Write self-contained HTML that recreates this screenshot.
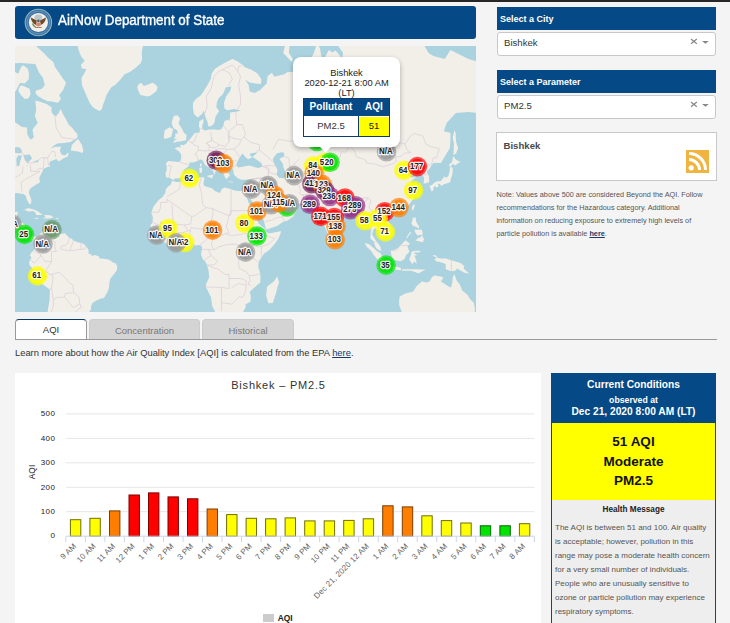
<!DOCTYPE html>
<html><head><meta charset="utf-8">
<style>
*{box-sizing:border-box}
html,body{margin:0;padding:0}
body{width:730px;height:623px;overflow:hidden;background:#f4f4f4;font-family:"Liberation Sans",sans-serif;position:relative;color:#333}
.a{position:absolute}
#topbar{left:0;top:0;width:730px;height:2px;background:#262626}
#hdr{left:15px;top:6px;width:461px;height:33px;background:#054a86;border-radius:3px}
#hdr .t{left:43px;top:6px;font-size:14px;color:#fff;white-space:nowrap;line-height:16px;transform:scaleX(0.955);transform-origin:0 0;-webkit-text-stroke:0.35px #fff}
#map{left:15px;top:46px;width:461px;height:266px;background:#aad3df;overflow:hidden}
.ph{background:#054a86;color:#fff;font-weight:bold;font-size:9px;line-height:12px;padding-left:3px}
.sel{background:#fff;border:1px solid #c8c8c8;border-radius:3px;font-size:9.6px;color:#333}
.note{font-size:7.3px;line-height:13px;color:#555;white-space:nowrap}
.cc{text-align:center;font-weight:bold;color:#fff;white-space:nowrap}
.tab{border:1px solid #ccc;border-bottom:none;border-radius:4px 4px 0 0;background:#d4d4d4;color:#777;font-size:9.5px;text-align:center;line-height:21px}
</style></head><body>
<div id="topbar" class="a"></div>
<div id="hdr" class="a">
  <svg class="a" style="left:9px;top:2px" width="29" height="29" viewBox="0 0 29 29">
    <circle cx="14.4" cy="14.5" r="13.2" fill="#3d74a4" stroke="#8fb5bf" stroke-width="1.1"/>
    <circle cx="14.4" cy="14.5" r="11.3" fill="none" stroke="#6f9cc0" stroke-width="0.8"/>
    <circle cx="14.4" cy="14.5" r="9.6" fill="#f3f0ea"/>
    <ellipse cx="14.4" cy="9.5" rx="4" ry="3" fill="#b9c6cc"/>
    <path d="M6.8 9.5 Q7.5 15.5 12.2 17 L12.8 12.5 Z" fill="#6e4c2a"/>
    <path d="M22 9.5 Q21.3 15.5 16.6 17 L16 12.5 Z" fill="#6e4c2a"/>
    <circle cx="14.4" cy="13" r="1.4" fill="#5a6470"/>
    <path d="M12 14.5 L16.8 14.5 L16.8 17.5 Q14.4 19.5 12 17.5 Z" fill="#cf8a7a"/>
    <path d="M8.5 15.5 Q9.5 18.5 11.5 19" stroke="#6f8a50" stroke-width="1.3" fill="none"/>
    <path d="M11 19.5 L17.8 19.5" stroke="#8a6a50" stroke-width="0.8"/>
  </svg>
  <div class="a t">AirNow Department of State</div>
</div>

<div id="map" class="a"><svg class="a" style="left:0;top:0" width="461" height="266" viewBox="15 46 461 266"><rect x="15" y="46" width="461" height="266" fill="#aad3df"/><path d="M-44.5 75.3L3.0 72.7L13.5 71.2L18.2 73.8L21.1 66.9L23.3 65.2L27.7 68.5L29.0 73.8L28.7 79.3L24.8 83.6L20.1 82.7L17.6 87.8L15.3 91.4L11.2 97.0L4.9 106.4L4.5 114.7L7.8 121.2L14.4 121.8L22.0 127.0L27.1 127.6L27.3 134.4L30.4 139.7L33.8 137.5L32.5 129.6L37.6 122.9L34.9 115.8L36.2 110.2L35.7 104.4L35.3 100.4L41.0 102.0L46.7 104.0L51.5 107.2L51.5 112.1L54.7 116.2L58.1 114.0L60.6 108.7L62.9 114.0L66.1 119.4L68.6 124.6L72.4 127.9L74.6 131.2L77.1 133.5L77.7 136.9L75.6 139.1L70.5 142.1L63.8 143.0L57.2 143.6L53.3 145.9L50.9 148.5L55.2 146.8L61.3 146.8L60.0 149.4L60.4 152.2L61.5 154.4L64.8 155.5L68.7 152.5L68.0 156.3L62.9 158.7L58.7 161.6L56.4 159.0L50.1 161.4L49.0 164.2L50.5 166.3L46.9 167.3L43.1 169.1L42.5 171.8L41.2 173.3L40.8 174.7L39.3 177.8L39.3 178.8L40.1 182.1L38.2 183.5L35.3 185.1L31.7 187.6L29.6 189.4L28.8 193.1L30.4 197.1L31.5 200.7L30.7 204.1L29.4 204.3L27.9 201.4L26.4 198.4L25.8 195.8L23.3 194.0L20.1 193.4L16.3 192.9L13.5 193.4L14.0 195.5L8.7 194.9L4.9 194.5L-0.8 198.1L-1.2 202.4L-2.3 210.7L1.1 216.8L4.0 217.8L8.7 217.6L11.6 215.2L12.5 212.4L18.0 211.8L17.2 214.8L16.7 217.8L15.9 220.2L15.0 223.0L19.2 223.2L22.0 222.8L25.4 224.8L24.7 229.7L24.3 232.6L26.0 234.9L27.9 236.0L32.5 235.7L36.4 237.2L38.2 236.4L40.1 233.7L42.5 232.2L45.8 231.6L47.3 229.9L47.8 231.6L47.7 233.5L50.3 231.6L50.5 230.2L53.3 232.6L56.4 233.3L61.0 234.1L64.8 233.2L66.1 234.5L68.6 237.2L72.4 239.3L72.9 240.6L78.6 242.4L81.3 243.1L84.1 244.3L86.2 246.4L88.5 249.8L88.5 253.6L91.4 254.6L91.5 255.9L95.2 255.1L99.0 256.5L99.5 258.4L103.7 258.7L107.5 259.3L110.4 260.6L113.2 262.7L116.0 263.5L117.4 266.9L116.6 270.8L114.2 273.7L110.4 278.5L109.4 282.4L109.0 287.4L108.1 290.4L106.0 294.4L103.9 298.1L100.9 298.5L97.0 300.2L92.7 302.7L91.2 305.8L90.8 310.1L87.9 313.4L79.0 324.7L46.7 324.7L47.7 311.2L49.6 299.6L49.9 289.4L45.8 286.4L40.1 282.4L36.8 276.6L32.8 268.8L29.4 265.0L29.0 262.2L30.9 258.4L31.7 257.8L29.8 255.5L31.3 252.6L33.4 250.7L34.7 248.8L36.6 246.0L36.4 241.2L34.7 239.3L30.9 239.9L28.1 238.0L25.8 237.8L21.4 235.3L20.5 233.0L18.6 230.2L17.1 228.3L14.4 228.1L9.8 226.7L5.3 223.4L3.0 222.4L-0.8 223.2L-6.5 221.8L-25.5 193.8L-44.5 75.3ZM50.5 101.2L58.1 102.8L61.0 98.7L59.1 94.9L62.9 90.5L66.1 82.7L62.3 77.8L59.1 72.7L55.2 67.4L53.3 61.9L47.7 57.2L43.8 53.0L38.2 48.0L31.5 41.4L3.0 41.4L3.0 64.1L20.1 63.0L35.3 64.1L39.1 72.7L42.9 77.8L44.8 85.0L42.0 88.7L36.2 90.5L35.3 93.1L38.2 96.2L42.9 99.1L47.7 101.2ZM22.4 85.5L29.6 88.7L30.6 94.0L28.7 98.3L24.8 99.1L21.1 95.3L18.2 90.5L20.1 86.0ZM100.1 111.0L102.2 108.3L103.1 104.4L104.7 100.4L106.5 94.9L111.3 87.3L115.1 85.0L119.8 80.3L124.6 74.3L130.3 71.7L136.0 67.4L140.8 63.0L142.1 59.0L141.7 53.0L142.7 46.7L149.3 32.9L145.5 8.4L50.5 8.4L73.3 32.9L77.1 43.4L78.6 49.9L80.9 56.0L84.7 60.7L80.9 64.7L81.9 68.5L86.4 69.0L83.8 74.3L81.5 77.8L81.9 85.0L83.8 89.6L85.3 93.1L87.6 98.3L89.5 102.4L92.3 106.4L95.2 108.7L98.0 110.2ZM147.4 96.6L140.4 94.9L138.1 90.5L137.3 87.3L138.8 84.1L141.7 83.1L143.6 86.0L148.3 84.6L152.2 82.7L155.0 84.1L157.7 87.3L156.5 90.9L154.1 93.1L150.2 95.7ZM70.8 150.5L71.8 145.0L78.1 138.8L81.9 145.0L83.4 150.8L82.4 153.0L78.1 151.6ZM26.9 208.5L22.2 210.9L24.8 210.1L28.7 211.6L33.4 211.1L36.2 213.4L35.9 215.0L40.4 215.0L42.7 214.4L39.7 212.8L35.7 210.3L30.6 208.5L27.7 208.3ZM45.2 215.0L50.5 215.2L53.7 217.6L48.6 218.4L42.0 218.6L45.8 217.6L44.0 215.4ZM34.7 217.8L38.5 218.0L37.6 219.0L34.5 218.4ZM55.8 217.8L58.9 218.0L58.5 218.8L55.8 218.8ZM173.2 180.0L171.5 179.0L169.4 177.4L166.4 177.8L165.4 173.7L166.6 170.5L166.8 166.8L165.8 163.2L168.5 161.1L174.0 161.6L179.7 161.9L181.2 159.0L181.2 154.4L178.8 151.3L174.6 148.5L177.8 147.1L180.5 147.4L180.5 144.5L183.5 145.3L186.3 143.6L188.2 140.6L190.2 139.1L192.4 136.0L194.9 133.1L199.7 132.5L199.8 128.6L198.9 126.3L199.3 121.2L203.6 118.7L203.3 122.9L202.1 126.3L202.5 129.6L205.3 130.6L209.2 129.6L214.8 129.6L219.0 129.9L221.5 128.9L223.4 125.6L224.3 121.2L228.2 119.4L229.5 121.2L230.1 116.5L230.1 112.5L236.7 111.7L240.9 110.6L233.8 109.1L227.2 110.2L224.3 108.3L224.0 102.4L226.2 96.2L230.1 90.9L231.4 86.4L225.9 87.3L223.0 94.0L218.7 98.3L216.8 102.4L216.4 107.5L219.2 111.0L217.3 114.0L215.4 116.9L214.8 121.2L213.7 123.9L210.5 126.6L208.0 125.9L207.6 122.2L206.1 118.7L204.6 114.3L203.8 110.6L202.1 114.0L197.8 117.6L194.1 114.3L193.0 108.7L193.0 102.8L195.8 99.1L200.4 95.7L203.4 91.8L206.9 86.0L210.9 78.8L211.6 73.8L214.8 69.0L219.6 65.8L225.3 62.4L232.5 59.0L237.3 61.3L242.4 64.7L245.2 67.4L250.9 69.6L257.2 73.2L261.4 79.3L261.0 84.1L254.8 83.6L249.1 82.2L245.2 79.8L248.7 85.0L249.6 91.4L254.8 93.1L260.1 90.1L266.7 83.6L267.5 76.3L271.9 72.7L274.3 76.8L284.2 74.3L287.1 72.2L294.6 71.7L298.3 65.2L306.1 70.1L309.9 68.5L310.2 60.7L313.6 53.6L317.1 43.4L319.9 48.0L321.8 59.0L323.1 72.7L320.3 82.2L325.0 81.2L324.5 70.1L325.6 56.0L328.9 49.9L332.6 52.4L335.5 50.5L340.2 56.0L341.2 64.7L343.1 53.0L336.4 43.4L335.5 17.1L373.5 17.1L402.0 32.9L422.9 43.4L428.6 53.0L433.4 56.0L444.8 59.0L450.4 49.9L468.5 59.0L487.5 64.7L497.0 102.4L487.5 106.4L478.0 112.9L468.5 112.1L455.8 112.9L446.6 122.9L443.8 131.2L450.4 132.8L450.4 140.6L449.9 147.9L446.6 153.6L440.9 162.9L434.1 162.7L431.8 164.7L430.1 168.0L426.7 171.8L429.0 176.6L429.2 182.1L425.8 183.2L423.5 183.7L423.9 181.4L423.9 177.8L423.3 176.2L421.4 173.0L420.0 171.0L417.2 171.3L413.8 173.5L414.4 168.6L411.5 170.5L408.6 172.5L406.9 174.2L409.4 176.6L411.9 177.4L416.4 176.9L412.1 180.2L410.5 182.5L413.2 188.2L415.1 191.2L415.7 193.8L413.8 198.1L410.7 202.4L408.1 205.6L404.9 208.7L400.5 210.1L394.4 211.8L392.9 214.2L389.6 211.8L386.8 212.8L384.5 215.8L385.9 218.8L389.1 222.8L391.2 227.7L391.0 231.6L387.8 233.5L385.9 235.9L382.6 237.2L382.0 233.9L379.2 231.6L376.9 229.7L375.2 227.9L373.4 229.7L372.0 234.5L374.3 238.0L376.4 241.2L380.0 246.0L381.5 250.9L378.8 250.0L376.0 247.9L374.1 243.1L373.5 241.2L370.3 238.4L370.6 234.5L371.0 230.6L369.1 223.8L368.4 221.8L364.0 222.2L362.7 217.8L360.0 213.8L357.9 210.7L355.4 209.7L352.6 211.1L348.8 211.8L348.2 214.2L342.1 218.8L339.9 221.8L336.4 223.2L336.1 228.1L335.1 232.6L334.0 235.9L330.8 238.2L328.3 234.5L325.8 229.7L323.7 223.8L321.8 216.8L321.6 212.8L321.4 210.3L318.4 213.2L314.6 210.1L313.3 208.7L311.4 206.6L310.6 204.9L301.3 203.9L292.8 203.7L290.5 200.3L283.2 199.2L279.8 196.0L276.2 193.8L274.7 195.3L276.0 198.1L278.5 201.4L281.4 202.4L281.0 202.0L281.4 205.6L286.1 206.2L288.6 203.9L290.7 201.8L290.7 204.9L294.8 207.4L297.1 209.7L294.6 213.8L293.1 216.8L287.1 220.8L283.2 221.8L277.6 225.8L269.0 228.7L266.0 229.5L264.8 224.8L263.9 220.8L258.0 211.8L255.7 206.6L251.3 200.3L249.6 198.1L250.0 194.9L248.5 198.6L245.2 194.0L244.9 191.2L249.6 188.2L250.9 185.1L251.5 181.4L252.3 178.8L246.2 179.7L241.4 179.7L237.7 178.3L233.8 174.5L233.3 170.5L232.5 168.3L229.1 168.6L228.2 170.5L227.0 169.1L226.8 171.8L230.1 175.0L229.1 176.2L226.2 179.3L224.5 176.6L224.0 174.7L221.9 171.8L220.4 169.3L219.8 165.5L214.7 161.6L210.5 156.8L206.9 156.6L207.4 160.3L211.6 165.5L214.1 165.8L217.5 169.1L218.5 171.0L215.8 169.3L215.0 173.3L213.3 175.7L213.9 173.0L212.0 169.3L210.5 168.6L206.9 166.3L204.6 164.2L203.1 160.8L200.4 159.3L197.4 161.1L193.8 162.2L189.4 162.4L189.6 164.7L187.7 167.0L184.4 169.3L182.9 171.8L183.9 173.7L182.2 176.4L179.3 178.3L175.1 178.5ZM172.5 180.7L170.6 184.8L169.1 185.8L166.0 188.7L165.3 192.9L162.6 197.1L158.4 200.3L153.5 206.6L151.4 212.2L151.0 213.2L152.5 215.8L152.9 218.8L152.2 222.8L150.2 225.4L151.8 227.7L151.6 230.6L155.0 232.6L157.5 235.5L158.4 237.6L160.7 240.3L163.0 241.6L168.9 245.2L175.9 243.7L179.7 244.5L183.5 243.1L186.3 241.8L190.0 241.4L195.3 245.4L199.3 245.0L201.7 246.0L202.1 248.8L201.4 251.7L201.0 254.6L202.5 258.4L206.1 262.7L206.9 265.0L208.6 270.4L209.2 277.5L206.3 283.4L205.9 287.0L211.1 297.5L212.2 306.1L214.8 311.2L217.3 320.1L221.5 324.2L231.9 322.4L238.6 317.8L242.4 313.0L245.8 306.9L245.4 304.6L250.6 301.6L250.8 295.4L249.6 292.0L253.8 288.0L260.4 282.4L260.4 276.6L260.3 273.7L258.2 266.6L258.9 261.2L261.4 257.4L264.2 253.6L269.6 249.8L274.7 244.1L278.5 238.4L280.6 233.5L281.0 231.0L276.6 232.0L269.0 233.5L265.6 231.6L265.4 229.3L259.1 223.8L258.6 223.6L256.6 218.8L254.2 215.6L253.4 210.7L251.1 206.6L248.5 202.4L247.5 199.2L245.2 194.0L244.9 191.2L242.4 190.5L240.3 191.2L234.8 190.5L227.8 188.2L224.7 187.6L221.7 189.1L220.0 193.1L214.8 190.9L212.0 188.2L208.6 187.3L204.4 186.0L203.4 183.7L204.0 180.7L204.6 178.1L202.1 177.1L198.7 178.1L193.0 178.3L189.2 178.3L183.5 180.7L179.7 182.1L175.9 182.1ZM277.2 276.6L279.1 282.4L277.6 286.4L276.2 292.4L272.8 302.9L268.4 303.3L266.1 295.4L267.1 286.4L269.9 284.4L273.8 281.4ZM172.7 143.3L176.8 141.8L181.6 141.2L186.0 140.3L186.3 138.2L186.5 134.7L183.9 132.8L182.4 129.6L179.7 125.3L178.6 122.9L180.1 118.7L177.8 115.4L174.0 115.8L172.5 119.4L171.7 122.9L172.9 127.0L174.0 128.6L177.2 130.2L177.8 133.5L174.9 133.8L175.7 136.3L173.6 138.5L177.2 139.1L174.9 140.0ZM164.9 139.1L163.7 137.2L164.3 133.1L164.7 130.2L169.6 127.3L173.1 129.3L172.1 133.5L171.3 136.9ZM199.1 168.0L202.1 167.5L201.9 172.5L199.7 173.0L199.5 169.3ZM199.8 164.2L201.4 162.9L201.6 165.5L201.0 167.0L200.0 166.0ZM207.1 175.7L213.1 174.7L212.2 178.5L207.4 176.6ZM228.2 181.4L233.5 181.8L232.9 182.5L228.3 182.1ZM244.9 182.5L249.2 180.9L247.9 182.8L245.8 183.5ZM335.9 234.9L338.9 238.4L338.9 241.2L336.6 242.4L335.1 240.3L335.3 237.4ZM431.6 191.6L429.5 186.0L432.4 184.8L433.0 183.7L436.2 181.4L440.9 181.1L443.4 177.8L444.4 176.6L446.6 177.8L448.6 175.4L449.5 171.8L450.1 167.5L451.8 166.8L452.9 169.3L452.3 174.7L450.8 179.0L450.3 182.1L449.1 182.8L446.1 183.5L443.4 184.4L441.5 186.0L440.0 184.1L438.1 183.7L438.5 186.7L436.2 187.6L435.2 186.0L433.9 187.1L433.2 190.5ZM449.7 167.0L449.1 164.2L452.0 162.2L453.1 156.3L456.1 159.8L460.5 161.9L458.1 163.2L455.6 165.3L452.0 164.0L451.4 166.0ZM453.3 154.9L453.7 149.4L453.9 143.6L452.7 137.5L454.6 130.2L455.6 132.8L456.1 142.1L458.1 147.9L456.1 153.6ZM414.4 203.9L414.7 206.6L413.0 210.7L411.7 208.7L412.6 205.6ZM393.8 214.6L394.4 215.8L391.5 218.4L389.8 216.4L391.5 214.8ZM412.8 217.8L415.7 217.6L416.1 221.8L419.1 226.7L419.1 228.7L417.2 227.3L413.4 226.1L411.3 223.8L412.1 221.8ZM421.9 234.9L424.0 239.3L422.9 242.2L415.5 240.6L418.1 238.0L420.6 237.2ZM421.9 229.7L422.9 234.5L417.2 235.5L415.3 232.6L414.4 229.7ZM406.2 237.6L410.5 231.6L411.1 232.6L406.8 238.4ZM405.4 240.3L408.3 242.2L410.0 244.1L407.3 246.0L409.4 251.7L405.8 255.5L404.9 258.4L401.0 261.2L395.4 260.3L392.9 259.3L391.5 255.5L390.6 250.7L394.4 249.8L398.2 247.9L400.7 245.0L402.9 243.1ZM364.6 242.9L368.8 244.1L372.5 246.9L376.4 250.7L380.7 253.6L383.4 258.4L384.9 260.3L384.5 264.8L381.1 263.1L377.3 259.3L374.1 255.5L371.0 250.7L366.9 246.9ZM385.3 264.8L389.3 265.2L393.4 266.7L397.6 266.7L401.0 268.3L401.0 270.2L394.4 269.4L389.6 268.5L384.9 266.9ZM402.0 269.2L409.6 269.2L417.2 269.2L421.0 269.4L424.8 269.4L424.8 270.0L419.1 273.1L418.1 273.3L411.5 270.8L405.8 270.8L402.0 270.4ZM413.2 251.1L421.0 250.7L419.1 252.6L413.4 252.6L417.2 255.5L414.4 255.5L416.2 260.3L416.6 264.1L414.4 261.2L412.3 264.3L409.2 259.3L411.1 254.6L411.5 252.1ZM432.4 255.5L435.2 255.1L438.1 258.0L440.0 258.4L445.7 258.4L451.4 260.3L460.5 263.1L464.3 266.0L463.8 268.8L469.4 273.7L464.7 272.7L460.9 270.8L457.1 268.5L455.2 270.8L451.4 271.2L445.7 269.2L445.7 264.1L440.9 262.2L436.2 261.2L434.3 259.3L437.1 258.0ZM399.7 296.5L405.4 293.4L413.4 291.4L416.2 286.4L421.9 281.4L426.7 282.4L429.5 281.4L432.0 277.3L434.3 275.6L440.9 276.6L443.4 277.5L440.9 281.4L448.6 286.4L451.0 287.4L452.3 282.4L452.7 277.5L454.2 274.0L456.7 280.5L459.8 284.4L462.4 290.8L467.2 294.4L470.4 299.6L473.8 302.7L474.8 308.0L474.8 312.3L468.5 324.7L402.0 324.7L401.8 311.9L399.1 304.8L399.1 300.6ZM291.8 61.9L283.2 53.0L286.1 41.4L289.9 41.4L288.9 53.0L292.8 59.0Z" fill="#f2efe9"/><path d="M281.4 152.2L276.6 153.6L272.8 159.0L273.8 162.9L276.6 168.0L277.6 170.5L276.4 174.2L278.9 177.8L284.2 178.3L286.1 176.6L285.1 171.8L284.2 169.3L283.2 166.8L283.2 164.2L279.4 159.0L284.2 156.3L284.2 152.7ZM238.8 167.5L243.3 166.5L250.0 165.5L254.8 167.3L258.6 168.0L262.5 166.5L261.4 162.9L255.7 159.0L252.8 157.1L248.1 159.3L245.2 156.8L242.4 153.6L240.5 156.3L238.0 160.3L236.3 164.2L237.1 166.8ZM252.8 156.8L257.6 152.2L250.0 153.6L250.4 156.3ZM8.7 153.0L14.4 149.4L15.7 147.1L20.1 147.4L22.4 152.2L19.2 153.6L14.4 152.7ZM16.7 166.3L19.2 166.0L20.5 160.3L22.0 155.5L18.2 155.5L16.3 159.0ZM22.6 155.2L29.6 154.4L32.1 158.2L27.7 162.9L24.8 160.3L23.9 156.3ZM24.8 166.5L33.6 163.2L31.5 164.0L26.8 165.5ZM31.9 162.2L38.7 159.8L38.2 162.2ZM243.9 253.2L248.1 253.0L248.7 256.5L246.2 258.9L243.7 257.4Z" fill="#aad3df"/><path d="M3.0 146.5L13.5 149.4L23.0 153.6L26.8 156.8L26.9 162.9L33.4 162.9L38.2 160.3L41.6 157.7L47.7 157.7L52.0 151.1L54.7 151.9L55.6 157.1M60.6 109.1L55.2 117.6L56.2 127.9L61.9 137.5L75.0 139.4M14.4 121.8L3.0 110.2M-1.2 202.6L-5.5 199.2L-8.4 194.2L-15.0 194.9L-18.8 189.8L-25.5 190.9M14.4 193.4L10.6 187.1L11.6 182.5L13.5 179.0L15.3 177.8L22.4 173.0L23.0 166.3M22.0 191.6L21.2 182.5L25.8 179.0L40.1 171.3M30.6 165.5L30.6 171.3L40.1 171.3M37.2 169.3L43.5 168.0L44.2 157.7M48.4 165.5L47.7 157.7M8.3 225.8L9.8 222.8L11.6 219.2L14.0 219.2L14.0 223.0M14.0 226.5L16.9 228.1M20.7 232.6L24.7 232.8M26.0 235.5L26.0 238.4M36.6 237.2L35.5 239.9M47.1 230.0L45.9 232.4L44.8 236.4L46.1 239.7L50.5 240.3L55.2 241.8L54.7 246.0L55.6 249.8L56.6 251.3M69.5 237.4L67.6 243.7L63.8 246.0L61.9 245.8L60.6 248.8L63.0 249.8L69.5 250.7L73.3 250.7L77.1 249.8L80.5 249.2L84.7 249.4L85.8 245.6M69.9 250.0L73.3 241.2M80.9 249.6L80.9 242.8M56.6 251.3L51.5 251.7L51.5 261.6L44.8 261.2L40.6 254.6L37.2 252.6L33.4 250.7M51.5 261.6L45.8 270.8L49.6 274.6L51.5 274.4L53.0 277.5L52.4 283.4L51.5 287.4L49.9 289.2M30.9 260.1L34.3 263.1L40.4 256.6L40.6 254.6M59.2 272.3L66.7 279.5L68.9 282.4L72.7 285.0L73.7 292.4L72.9 292.8L65.3 293.4L64.6 297.1L57.2 297.3L53.3 299.6L51.5 287.4M51.5 274.4L59.2 272.3M73.7 292.4L79.0 297.1L79.8 303.9L73.3 307.6L64.6 297.1M79.8 303.9L81.3 307.3L77.1 310.1L74.1 313.8M53.3 299.6L53.3 306.9L51.1 312.3M180.1 161.9L184.4 163.7L189.6 164.5M171.7 166.5L170.2 165.5L167.9 165.3M170.4 165.8L171.2 167.5L170.2 171.3L169.2 176.6M188.2 140.6L191.1 142.4L194.5 145.0L195.3 145.3L198.7 146.5L197.9 150.5L194.9 154.4L196.8 155.2L198.1 160.1M191.1 142.4L194.9 141.2L195.1 137.8L196.8 136.6L197.0 133.5M199.8 128.3L201.7 128.6M210.5 131.5L211.4 137.5L212.0 140.6L206.5 142.7L209.7 147.1L208.2 150.8L203.4 150.8L201.6 150.5L197.9 150.5M211.4 137.5L212.0 140.6L215.8 142.7L219.2 145.0L226.2 146.2L229.1 141.2L228.3 136.0L228.2 131.5L223.4 125.6M206.5 142.7L211.1 147.7L215.8 147.7L219.2 145.0M208.2 150.8L214.8 150.8L215.8 149.4L225.5 148.2L226.2 149.9L233.8 148.8L237.1 153.3L239.7 157.1M214.8 150.8L213.9 153.6L209.3 156.3M226.2 149.9L223.4 154.4L226.6 159.0L231.0 161.1L236.7 160.8M223.4 154.4L219.6 155.2L220.4 162.2L222.4 165.5L224.3 164.7L226.1 164.7L227.2 167.0L222.6 168.0L221.9 171.5M226.1 164.7L227.2 167.0L233.1 166.3L236.7 165.5M233.1 166.3L234.0 167.5L233.1 168.6M209.3 156.3L212.4 156.0L219.6 155.2M214.8 161.6L220.7 164.2M229.1 141.2L229.1 131.2L236.7 124.6L236.3 119.4L235.8 112.9M228.3 136.0L232.9 138.2L241.4 139.7L243.9 137.2L250.9 142.4L259.5 144.8L259.5 149.4L256.1 151.9M241.4 139.7L239.0 145.0L233.8 148.8M236.7 124.6L242.4 124.6L245.6 134.1L243.9 137.2M235.8 112.9L236.7 110.2L240.5 104.4L240.5 96.2L238.6 85.0L240.5 76.3L237.7 71.2L238.6 66.3L242.4 65.8M204.6 114.0L207.2 106.4L206.3 96.2L211.1 88.7L213.9 76.8L217.7 72.2L222.4 69.6L227.2 71.7L230.1 73.8L232.3 79.3L228.5 85.0L229.1 86.0M222.4 69.6L224.3 68.5L232.9 65.2L237.7 71.2M259.5 149.4L258.9 149.9L265.2 154.9L272.8 161.6L276.6 164.2M262.5 166.5L266.1 165.5L270.9 165.5L275.6 166.0L276.6 164.2M266.1 165.5L266.3 167.8L269.0 168.0L268.6 171.8L271.5 173.3L275.3 174.2L276.6 174.2M262.5 166.5L266.1 167.8L268.6 171.3L267.9 177.4L264.1 177.6L255.7 178.3L252.3 178.8M252.3 178.8L257.6 178.5L264.1 177.6L261.8 183.9L257.2 186.2L253.4 188.7L251.5 186.4L250.9 185.1M257.2 186.2L258.2 188.9L253.8 190.5L255.7 193.8L252.8 195.1L250.0 194.9M261.8 183.9L270.9 187.1L274.7 193.8L273.8 195.8L271.9 196.0L268.4 195.5L263.3 191.4L258.2 188.9M267.9 177.4L269.9 180.4L270.9 187.1M273.8 195.8L271.9 196.0L275.5 197.1M281.5 206.0L282.3 208.9L288.2 209.5L289.3 210.7L288.0 214.8L282.3 216.8L276.6 217.6L271.9 220.2L265.2 221.4L264.8 222.0M282.3 216.8L284.4 221.6M289.3 210.7L290.7 204.7M300.4 204.3L301.3 201.4L303.8 199.9L303.2 194.9L300.4 194.5L299.2 192.7L300.9 190.9L299.0 186.0L298.6 178.8L299.8 178.8M298.6 178.8L302.2 181.8L306.1 179.5L309.9 176.9L312.3 177.4L315.5 176.6L318.4 174.7L318.0 178.1L320.3 177.8L325.8 176.9L319.9 179.0L318.8 183.2L316.3 184.8L318.2 187.1L315.5 190.0L312.7 190.5L309.5 194.0L302.2 195.1M318.4 174.7L317.3 171.3L323.7 171.0L325.8 176.9M323.7 171.0L327.3 169.8L332.6 166.8L335.9 165.3L337.0 162.4L336.4 158.2L340.2 156.8L341.2 151.6L345.9 152.2L349.4 145.9M309.9 176.9L303.2 173.0L299.4 169.3L293.7 164.2L289.9 167.3L288.8 157.7L284.2 156.8M317.3 171.3L313.6 169.1L319.4 167.5L322.2 168.3L317.4 165.0L323.1 164.2L324.5 162.4L335.9 165.3M278.5 139.1L288.9 141.2L300.0 141.2L299.4 132.8L307.0 129.3L313.1 127.9L318.8 130.6L323.1 132.8L328.9 131.2L335.1 141.2L341.2 140.6L345.0 144.5L349.4 145.9M272.8 149.4L278.5 139.1M318.4 174.7L317.3 171.3M293.7 164.2L299.4 159.0M311.4 206.6L315.5 206.2L318.4 205.6L316.5 199.9L320.3 198.1L325.0 191.6L325.0 188.2L326.0 183.7L331.3 181.4M331.3 181.4L334.5 188.2L333.2 191.2L337.4 193.4L335.5 196.4L342.1 199.4L350.9 201.4L350.9 198.4L358.3 200.7L358.3 198.6L368.4 197.7L364.9 201.8L363.0 206.2L360.6 210.7L359.4 212.2M350.9 201.4L354.1 202.4L351.6 206.6L352.2 210.7M358.3 200.7L357.7 206.2L358.9 212.2M349.4 145.9L354.5 142.1L359.2 141.5L367.8 143.6L370.1 137.5L377.7 141.8L383.0 142.7L388.7 145.6L401.0 142.7L405.0 144.2M349.4 145.9L354.5 150.8L356.4 156.8L364.9 159.5L366.9 162.9L375.4 164.2L383.0 166.8L393.1 163.7L396.3 161.1L395.4 157.1L400.1 156.6L405.0 153.0L411.1 152.7L407.1 149.9L405.0 144.2M405.0 144.2L410.5 136.0L414.4 133.5L422.9 136.0L425.8 144.2L431.4 146.8L439.4 148.5L436.6 157.7L433.0 157.9L431.6 164.5M419.7 170.8L423.9 166.0L427.1 165.5L431.6 164.5M423.1 175.4L427.5 174.0M368.4 197.7L370.6 200.3L370.1 204.5L368.8 206.8L371.6 210.7L375.4 211.8L376.7 209.7L379.2 209.7L383.9 208.3L386.2 209.1L388.7 211.8M375.4 211.8L374.4 214.8L376.0 216.0L374.4 219.8L377.3 219.0L382.6 219.8L383.9 223.2L387.8 225.8L384.9 227.1L385.9 232.6L383.0 233.5L379.2 231.6M375.4 211.8L377.7 209.9L379.6 213.2L381.9 217.8L385.9 222.2L387.8 225.8M368.4 221.8L370.8 222.8L371.6 227.5L370.5 233.2M373.7 241.2L375.4 242.2L377.3 241.8M391.5 250.6L394.4 250.4L397.2 249.8L400.1 245.0L402.9 245.6L405.8 245.4L408.6 245.2M451.4 258.5L451.4 271.2M180.3 182.3L180.1 188.2L176.5 191.2L167.0 196.6M167.0 198.8L167.0 202.4L160.7 202.4L160.7 207.6L158.8 212.2L151.2 212.2M167.0 199.6L174.4 204.5L185.8 212.8L191.5 216.4L194.5 216.0L206.1 207.6M201.6 177.8L199.3 184.8L201.6 193.4L202.5 204.5L206.1 207.6M206.1 207.6L212.0 208.7L229.1 215.8L229.1 214.8L231.0 214.8L231.0 210.7M231.0 190.0L231.0 210.7L253.8 210.7M231.0 210.7L229.1 215.8M160.7 225.2L160.7 221.8L161.8 223.8L173.2 222.4L173.1 223.8L172.1 204.7M151.2 212.2L152.2 222.2L160.1 225.6L161.8 229.9L157.5 229.7L151.8 229.9M161.8 229.9L167.3 232.0L168.3 237.4L169.2 245.0M167.3 232.0L173.2 233.7L178.2 232.8L177.8 243.9M178.2 232.8L183.5 232.6L185.8 242.0M183.5 232.6L188.2 230.6L190.3 231.2L188.6 241.4M173.1 223.8L184.1 225.0L188.2 230.6M191.5 216.4L191.1 222.4L190.2 224.0L184.1 225.0M190.3 231.2L191.1 227.7L200.6 229.1L209.3 227.3L212.9 214.8L212.9 207.6M209.3 227.3L211.2 231.6L208.6 236.4L205.9 240.3L199.8 244.9M211.2 231.6L212.9 235.5L212.9 239.3L219.6 236.4L225.3 233.5L229.1 232.6L226.2 226.7L229.1 215.8M212.9 239.3L211.1 245.0L213.9 249.8L208.2 249.4L205.0 249.4L202.1 249.4M213.9 249.8L218.7 246.9L225.3 245.0L231.0 244.1L235.6 244.1L242.0 246.9L242.4 249.4L240.1 256.1L238.6 258.9L239.0 267.9L241.4 269.4M208.2 249.4L211.1 255.5L206.3 258.4L204.8 260.8M211.1 255.5L217.7 261.2L214.3 264.8L206.7 265.0M206.7 265.0L213.9 267.9L217.7 268.8L225.3 274.6L229.1 274.6L229.1 278.5M205.9 287.0L221.5 287.4L228.2 288.4M221.5 287.4L221.5 296.5L221.5 311.2M221.5 302.7L231.9 304.2L238.6 296.9M231.4 288.0L238.6 283.4L246.2 285.4L245.2 292.4L243.0 297.1L238.6 296.9M229.1 278.5L229.1 288.4L228.2 288.4M241.4 269.4L246.2 271.7L249.2 275.6L250.0 280.5L248.1 284.4L250.9 285.4M229.1 278.5L240.5 278.5L246.2 280.5L246.2 285.4M260.3 273.7L255.7 275.2L250.0 275.6M247.9 255.5L254.9 259.3L258.0 262.5M240.1 256.1L243.3 255.5L247.9 255.5M242.4 249.4L247.9 246.8L250.0 244.9L250.9 243.1L248.1 235.5L247.2 233.2L240.5 234.5L234.8 235.3L228.2 235.1L225.3 233.5M247.9 246.8L250.0 244.9L258.6 246.9L261.4 246.4L263.3 246.0L267.1 244.3L269.0 244.1L274.7 238.4L268.1 236.4L265.2 232.6M261.4 246.4L261.4 256.6M250.9 243.1L251.9 239.3L254.8 238.4L253.8 229.3L255.7 228.7L259.5 225.8L263.9 229.7L265.4 229.3M252.8 226.1L253.4 210.7M253.8 210.7L252.8 226.1L248.1 235.5" fill="none" stroke="#d8c9d6" stroke-width="0.65" stroke-linejoin="round"/><defs><filter id="hb" x="-20%" y="-40%" width="140%" height="180%"><feGaussianBlur stdDeviation="0.5"/></filter></defs><circle cx="12" cy="224" r="9.8" fill="rgb(153,153,153)" fill-opacity="0.68"/><circle cx="12" cy="224" r="7.8" fill="rgb(153,153,153)" fill-opacity="0.75"/><circle cx="24.5" cy="234.4" r="9.8" fill="rgb(0,228,0)" fill-opacity="0.68"/><circle cx="24.5" cy="234.4" r="7.8" fill="rgb(0,228,0)" fill-opacity="0.75"/><circle cx="51.9" cy="229.6" r="9.8" fill="rgb(105,150,105)" fill-opacity="0.68"/><circle cx="51.9" cy="229.6" r="7.8" fill="rgb(105,150,105)" fill-opacity="0.75"/><circle cx="43" cy="244" r="9.8" fill="rgb(153,153,153)" fill-opacity="0.68"/><circle cx="43" cy="244" r="7.8" fill="rgb(153,153,153)" fill-opacity="0.75"/><circle cx="37.5" cy="275.9" r="9.8" fill="rgb(255,255,0)" fill-opacity="0.68"/><circle cx="37.5" cy="275.9" r="7.8" fill="rgb(255,255,0)" fill-opacity="0.75"/><circle cx="216.3" cy="160.3" r="9.8" fill="rgb(110,25,85)" fill-opacity="0.68"/><circle cx="216.3" cy="160.3" r="7.8" fill="rgb(110,25,85)" fill-opacity="0.75"/><circle cx="223.5" cy="163.6" r="9.8" fill="rgb(255,126,0)" fill-opacity="0.68"/><circle cx="223.5" cy="163.6" r="7.8" fill="rgb(255,126,0)" fill-opacity="0.75"/><circle cx="189.6" cy="178.2" r="9.8" fill="rgb(255,255,0)" fill-opacity="0.68"/><circle cx="189.6" cy="178.2" r="7.8" fill="rgb(255,255,0)" fill-opacity="0.75"/><circle cx="156.8" cy="235.1" r="9.8" fill="rgb(153,153,153)" fill-opacity="0.68"/><circle cx="156.8" cy="235.1" r="7.8" fill="rgb(153,153,153)" fill-opacity="0.75"/><circle cx="168.3" cy="228.5" r="9.8" fill="rgb(255,255,0)" fill-opacity="0.68"/><circle cx="168.3" cy="228.5" r="7.8" fill="rgb(255,255,0)" fill-opacity="0.75"/><circle cx="184.8" cy="242.5" r="9.8" fill="rgb(255,255,0)" fill-opacity="0.68"/><circle cx="184.8" cy="242.5" r="7.8" fill="rgb(255,255,0)" fill-opacity="0.75"/><circle cx="176.2" cy="242.9" r="9.8" fill="rgb(153,153,153)" fill-opacity="0.68"/><circle cx="176.2" cy="242.9" r="7.8" fill="rgb(153,153,153)" fill-opacity="0.75"/><circle cx="212.6" cy="230.1" r="9.8" fill="rgb(255,126,0)" fill-opacity="0.68"/><circle cx="212.6" cy="230.1" r="7.8" fill="rgb(255,126,0)" fill-opacity="0.75"/><circle cx="244.8" cy="223.3" r="9.8" fill="rgb(255,255,0)" fill-opacity="0.68"/><circle cx="244.8" cy="223.3" r="7.8" fill="rgb(255,255,0)" fill-opacity="0.75"/><circle cx="257.2" cy="211" r="9.8" fill="rgb(255,126,0)" fill-opacity="0.68"/><circle cx="257.2" cy="211" r="7.8" fill="rgb(255,126,0)" fill-opacity="0.75"/><circle cx="257" cy="236" r="9.8" fill="rgb(0,228,0)" fill-opacity="0.68"/><circle cx="257" cy="236" r="7.8" fill="rgb(0,228,0)" fill-opacity="0.75"/><circle cx="245.5" cy="252.1" r="9.8" fill="rgb(153,153,153)" fill-opacity="0.68"/><circle cx="245.5" cy="252.1" r="7.8" fill="rgb(153,153,153)" fill-opacity="0.75"/><circle cx="251.4" cy="189.1" r="9.8" fill="rgb(153,153,153)" fill-opacity="0.68"/><circle cx="251.4" cy="189.1" r="7.8" fill="rgb(153,153,153)" fill-opacity="0.75"/><circle cx="268" cy="185.6" r="9.8" fill="rgb(153,153,153)" fill-opacity="0.68"/><circle cx="268" cy="185.6" r="7.8" fill="rgb(153,153,153)" fill-opacity="0.75"/><circle cx="274.5" cy="195.2" r="9.8" fill="rgb(255,126,0)" fill-opacity="0.68"/><circle cx="274.5" cy="195.2" r="7.8" fill="rgb(255,126,0)" fill-opacity="0.75"/><circle cx="271.3" cy="204.8" r="9.8" fill="rgb(153,153,153)" fill-opacity="0.68"/><circle cx="271.3" cy="204.8" r="7.8" fill="rgb(153,153,153)" fill-opacity="0.75"/><circle cx="287" cy="207" r="9.8" fill="rgb(0,228,0)" fill-opacity="0.68"/><circle cx="287" cy="207" r="7.8" fill="rgb(0,228,0)" fill-opacity="0.75"/><circle cx="289.3" cy="203.7" r="9.8" fill="rgb(153,153,153)" fill-opacity="0.68"/><circle cx="289.3" cy="203.7" r="7.8" fill="rgb(153,153,153)" fill-opacity="0.75"/><circle cx="279.2" cy="202.6" r="9.8" fill="rgb(255,126,0)" fill-opacity="0.68"/><circle cx="279.2" cy="202.6" r="7.8" fill="rgb(255,126,0)" fill-opacity="0.75"/><circle cx="294" cy="175.6" r="9.8" fill="rgb(153,153,153)" fill-opacity="0.68"/><circle cx="294" cy="175.6" r="7.8" fill="rgb(153,153,153)" fill-opacity="0.75"/><circle cx="317" cy="141.5" r="9.8" fill="rgb(0,228,0)" fill-opacity="0.68"/><circle cx="317" cy="141.5" r="7.8" fill="rgb(0,228,0)" fill-opacity="0.75"/><circle cx="325" cy="162.5" r="9.8" fill="rgb(255,255,0)" fill-opacity="0.68"/><circle cx="325" cy="162.5" r="7.8" fill="rgb(255,255,0)" fill-opacity="0.75"/><circle cx="330" cy="162.2" r="9.8" fill="rgb(0,228,0)" fill-opacity="0.68"/><circle cx="330" cy="162.2" r="7.8" fill="rgb(0,228,0)" fill-opacity="0.75"/><circle cx="313.5" cy="165.8" r="9.8" fill="rgb(255,255,0)" fill-opacity="0.68"/><circle cx="313.5" cy="165.8" r="7.8" fill="rgb(255,255,0)" fill-opacity="0.75"/><circle cx="314.1" cy="173.1" r="9.8" fill="rgb(255,126,0)" fill-opacity="0.68"/><circle cx="314.1" cy="173.1" r="7.8" fill="rgb(255,126,0)" fill-opacity="0.75"/><circle cx="311.9" cy="183.8" r="9.8" fill="rgb(110,25,85)" fill-opacity="0.68"/><circle cx="311.9" cy="183.8" r="7.8" fill="rgb(110,25,85)" fill-opacity="0.75"/><circle cx="322" cy="184.4" r="9.8" fill="rgb(255,126,0)" fill-opacity="0.68"/><circle cx="322" cy="184.4" r="7.8" fill="rgb(255,126,0)" fill-opacity="0.75"/><circle cx="324.8" cy="190.6" r="9.8" fill="rgb(110,25,85)" fill-opacity="0.68"/><circle cx="324.8" cy="190.6" r="7.8" fill="rgb(110,25,85)" fill-opacity="0.75"/><circle cx="329.8" cy="196.5" r="9.8" fill="rgb(150,50,135)" fill-opacity="0.68"/><circle cx="329.8" cy="196.5" r="7.8" fill="rgb(150,50,135)" fill-opacity="0.75"/><circle cx="345" cy="198" r="9.8" fill="rgb(255,0,0)" fill-opacity="0.68"/><circle cx="345" cy="198" r="7.8" fill="rgb(255,0,0)" fill-opacity="0.75"/><circle cx="310.1" cy="204.2" r="9.8" fill="rgb(150,50,135)" fill-opacity="0.68"/><circle cx="310.1" cy="204.2" r="7.8" fill="rgb(150,50,135)" fill-opacity="0.75"/><circle cx="350.6" cy="209.7" r="9.8" fill="rgb(150,50,135)" fill-opacity="0.68"/><circle cx="350.6" cy="209.7" r="7.8" fill="rgb(150,50,135)" fill-opacity="0.75"/><circle cx="355.6" cy="205.7" r="9.8" fill="rgb(150,50,135)" fill-opacity="0.68"/><circle cx="355.6" cy="205.7" r="7.8" fill="rgb(150,50,135)" fill-opacity="0.75"/><circle cx="320.8" cy="216.4" r="9.8" fill="rgb(255,0,0)" fill-opacity="0.68"/><circle cx="320.8" cy="216.4" r="7.8" fill="rgb(255,0,0)" fill-opacity="0.75"/><circle cx="334.3" cy="217.5" r="9.8" fill="rgb(255,0,0)" fill-opacity="0.68"/><circle cx="334.3" cy="217.5" r="7.8" fill="rgb(255,0,0)" fill-opacity="0.75"/><circle cx="336" cy="226.5" r="9.8" fill="rgb(255,126,0)" fill-opacity="0.68"/><circle cx="336" cy="226.5" r="7.8" fill="rgb(255,126,0)" fill-opacity="0.75"/><circle cx="335.2" cy="239.8" r="9.8" fill="rgb(255,126,0)" fill-opacity="0.68"/><circle cx="335.2" cy="239.8" r="7.8" fill="rgb(255,126,0)" fill-opacity="0.75"/><circle cx="365" cy="220.7" r="9.8" fill="rgb(255,255,0)" fill-opacity="0.68"/><circle cx="365" cy="220.7" r="7.8" fill="rgb(255,255,0)" fill-opacity="0.75"/><circle cx="384.7" cy="211.7" r="9.8" fill="rgb(255,0,0)" fill-opacity="0.68"/><circle cx="384.7" cy="211.7" r="7.8" fill="rgb(255,0,0)" fill-opacity="0.75"/><circle cx="378.2" cy="218.2" r="9.8" fill="rgb(255,255,0)" fill-opacity="0.68"/><circle cx="378.2" cy="218.2" r="7.8" fill="rgb(255,255,0)" fill-opacity="0.75"/><circle cx="399" cy="207.5" r="9.8" fill="rgb(255,126,0)" fill-opacity="0.68"/><circle cx="399" cy="207.5" r="7.8" fill="rgb(255,126,0)" fill-opacity="0.75"/><circle cx="385.4" cy="231.9" r="9.8" fill="rgb(255,255,0)" fill-opacity="0.68"/><circle cx="385.4" cy="231.9" r="7.8" fill="rgb(255,255,0)" fill-opacity="0.75"/><circle cx="386.1" cy="265.1" r="9.8" fill="rgb(0,228,0)" fill-opacity="0.68"/><circle cx="386.1" cy="265.1" r="7.8" fill="rgb(0,228,0)" fill-opacity="0.75"/><circle cx="386.6" cy="151.8" r="9.8" fill="rgb(153,153,153)" fill-opacity="0.68"/><circle cx="386.6" cy="151.8" r="7.8" fill="rgb(153,153,153)" fill-opacity="0.75"/><circle cx="403.9" cy="170.4" r="9.8" fill="rgb(255,255,0)" fill-opacity="0.68"/><circle cx="403.9" cy="170.4" r="7.8" fill="rgb(255,255,0)" fill-opacity="0.75"/><circle cx="417.4" cy="166.6" r="9.8" fill="rgb(255,0,0)" fill-opacity="0.68"/><circle cx="417.4" cy="166.6" r="7.8" fill="rgb(255,0,0)" fill-opacity="0.75"/><circle cx="413.5" cy="190.3" r="9.8" fill="rgb(255,255,0)" fill-opacity="0.68"/><circle cx="413.5" cy="190.3" r="7.8" fill="rgb(255,255,0)" fill-opacity="0.75"/><g font-family="Liberation Sans"><text transform="translate(11.2 226.5) scale(0.9 1)" text-anchor="middle" font-size="8.8" font-weight="bold" fill="#fff" stroke="#fff" stroke-width="2.6" stroke-linejoin="round" filter="url(#hb)" opacity="0.9">N/A</text><text transform="translate(11.2 226.5) scale(0.9 1)" text-anchor="middle" font-size="8.8" font-weight="bold" fill="#222">N/A</text><text transform="translate(23.7 236.9) scale(0.9 1)" text-anchor="middle" font-size="8.8" font-weight="bold" fill="#fff" stroke="#fff" stroke-width="2.6" stroke-linejoin="round" filter="url(#hb)" opacity="0.9">25</text><text transform="translate(23.7 236.9) scale(0.9 1)" text-anchor="middle" font-size="8.8" font-weight="bold" fill="#222">25</text><text transform="translate(51.1 232.1) scale(0.9 1)" text-anchor="middle" font-size="8.8" font-weight="bold" fill="#fff" stroke="#fff" stroke-width="2.6" stroke-linejoin="round" filter="url(#hb)" opacity="0.9">N/A</text><text transform="translate(51.1 232.1) scale(0.9 1)" text-anchor="middle" font-size="8.8" font-weight="bold" fill="#222">N/A</text><text transform="translate(42.2 246.5) scale(0.9 1)" text-anchor="middle" font-size="8.8" font-weight="bold" fill="#fff" stroke="#fff" stroke-width="2.6" stroke-linejoin="round" filter="url(#hb)" opacity="0.9">N/A</text><text transform="translate(42.2 246.5) scale(0.9 1)" text-anchor="middle" font-size="8.8" font-weight="bold" fill="#222">N/A</text><text transform="translate(36.7 278.4) scale(0.9 1)" text-anchor="middle" font-size="8.8" font-weight="bold" fill="#fff" stroke="#fff" stroke-width="2.6" stroke-linejoin="round" filter="url(#hb)" opacity="0.9">61</text><text transform="translate(36.7 278.4) scale(0.9 1)" text-anchor="middle" font-size="8.8" font-weight="bold" fill="#222">61</text><text transform="translate(215.5 162.8) scale(0.9 1)" text-anchor="middle" font-size="8.8" font-weight="bold" fill="#fff" stroke="#fff" stroke-width="2.6" stroke-linejoin="round" filter="url(#hb)" opacity="0.9">300</text><text transform="translate(215.5 162.8) scale(0.9 1)" text-anchor="middle" font-size="8.8" font-weight="bold" fill="#222">300</text><text transform="translate(222.7 166.1) scale(0.9 1)" text-anchor="middle" font-size="8.8" font-weight="bold" fill="#fff" stroke="#fff" stroke-width="2.6" stroke-linejoin="round" filter="url(#hb)" opacity="0.9">103</text><text transform="translate(222.7 166.1) scale(0.9 1)" text-anchor="middle" font-size="8.8" font-weight="bold" fill="#222">103</text><text transform="translate(188.8 180.7) scale(0.9 1)" text-anchor="middle" font-size="8.8" font-weight="bold" fill="#fff" stroke="#fff" stroke-width="2.6" stroke-linejoin="round" filter="url(#hb)" opacity="0.9">62</text><text transform="translate(188.8 180.7) scale(0.9 1)" text-anchor="middle" font-size="8.8" font-weight="bold" fill="#222">62</text><text transform="translate(156.0 237.6) scale(0.9 1)" text-anchor="middle" font-size="8.8" font-weight="bold" fill="#fff" stroke="#fff" stroke-width="2.6" stroke-linejoin="round" filter="url(#hb)" opacity="0.9">N/A</text><text transform="translate(156.0 237.6) scale(0.9 1)" text-anchor="middle" font-size="8.8" font-weight="bold" fill="#222">N/A</text><text transform="translate(167.5 231.0) scale(0.9 1)" text-anchor="middle" font-size="8.8" font-weight="bold" fill="#fff" stroke="#fff" stroke-width="2.6" stroke-linejoin="round" filter="url(#hb)" opacity="0.9">95</text><text transform="translate(167.5 231.0) scale(0.9 1)" text-anchor="middle" font-size="8.8" font-weight="bold" fill="#222">95</text><text transform="translate(184.0 245.0) scale(0.9 1)" text-anchor="middle" font-size="8.8" font-weight="bold" fill="#fff" stroke="#fff" stroke-width="2.6" stroke-linejoin="round" filter="url(#hb)" opacity="0.9">52</text><text transform="translate(184.0 245.0) scale(0.9 1)" text-anchor="middle" font-size="8.8" font-weight="bold" fill="#222">52</text><text transform="translate(175.4 245.4) scale(0.9 1)" text-anchor="middle" font-size="8.8" font-weight="bold" fill="#fff" stroke="#fff" stroke-width="2.6" stroke-linejoin="round" filter="url(#hb)" opacity="0.9">N/A</text><text transform="translate(175.4 245.4) scale(0.9 1)" text-anchor="middle" font-size="8.8" font-weight="bold" fill="#222">N/A</text><text transform="translate(211.8 232.6) scale(0.9 1)" text-anchor="middle" font-size="8.8" font-weight="bold" fill="#fff" stroke="#fff" stroke-width="2.6" stroke-linejoin="round" filter="url(#hb)" opacity="0.9">101</text><text transform="translate(211.8 232.6) scale(0.9 1)" text-anchor="middle" font-size="8.8" font-weight="bold" fill="#222">101</text><text transform="translate(244.0 225.8) scale(0.9 1)" text-anchor="middle" font-size="8.8" font-weight="bold" fill="#fff" stroke="#fff" stroke-width="2.6" stroke-linejoin="round" filter="url(#hb)" opacity="0.9">80</text><text transform="translate(244.0 225.8) scale(0.9 1)" text-anchor="middle" font-size="8.8" font-weight="bold" fill="#222">80</text><text transform="translate(256.4 213.5) scale(0.9 1)" text-anchor="middle" font-size="8.8" font-weight="bold" fill="#fff" stroke="#fff" stroke-width="2.6" stroke-linejoin="round" filter="url(#hb)" opacity="0.9">101</text><text transform="translate(256.4 213.5) scale(0.9 1)" text-anchor="middle" font-size="8.8" font-weight="bold" fill="#222">101</text><text transform="translate(256.2 238.5) scale(0.9 1)" text-anchor="middle" font-size="8.8" font-weight="bold" fill="#fff" stroke="#fff" stroke-width="2.6" stroke-linejoin="round" filter="url(#hb)" opacity="0.9">133</text><text transform="translate(256.2 238.5) scale(0.9 1)" text-anchor="middle" font-size="8.8" font-weight="bold" fill="#222">133</text><text transform="translate(244.7 254.6) scale(0.9 1)" text-anchor="middle" font-size="8.8" font-weight="bold" fill="#fff" stroke="#fff" stroke-width="2.6" stroke-linejoin="round" filter="url(#hb)" opacity="0.9">N/A</text><text transform="translate(244.7 254.6) scale(0.9 1)" text-anchor="middle" font-size="8.8" font-weight="bold" fill="#222">N/A</text><text transform="translate(250.6 191.6) scale(0.9 1)" text-anchor="middle" font-size="8.8" font-weight="bold" fill="#fff" stroke="#fff" stroke-width="2.6" stroke-linejoin="round" filter="url(#hb)" opacity="0.9">N/A</text><text transform="translate(250.6 191.6) scale(0.9 1)" text-anchor="middle" font-size="8.8" font-weight="bold" fill="#222">N/A</text><text transform="translate(267.2 188.1) scale(0.9 1)" text-anchor="middle" font-size="8.8" font-weight="bold" fill="#fff" stroke="#fff" stroke-width="2.6" stroke-linejoin="round" filter="url(#hb)" opacity="0.9">N/A</text><text transform="translate(267.2 188.1) scale(0.9 1)" text-anchor="middle" font-size="8.8" font-weight="bold" fill="#222">N/A</text><text transform="translate(273.7 197.7) scale(0.9 1)" text-anchor="middle" font-size="8.8" font-weight="bold" fill="#fff" stroke="#fff" stroke-width="2.6" stroke-linejoin="round" filter="url(#hb)" opacity="0.9">124</text><text transform="translate(273.7 197.7) scale(0.9 1)" text-anchor="middle" font-size="8.8" font-weight="bold" fill="#222">124</text><text transform="translate(270.5 207.3) scale(0.9 1)" text-anchor="middle" font-size="8.8" font-weight="bold" fill="#fff" stroke="#fff" stroke-width="2.6" stroke-linejoin="round" filter="url(#hb)" opacity="0.9">N/A</text><text transform="translate(270.5 207.3) scale(0.9 1)" text-anchor="middle" font-size="8.8" font-weight="bold" fill="#222">N/A</text><text transform="translate(288.5 206.2) scale(0.9 1)" text-anchor="middle" font-size="8.8" font-weight="bold" fill="#fff" stroke="#fff" stroke-width="2.6" stroke-linejoin="round" filter="url(#hb)" opacity="0.9">N/A</text><text transform="translate(288.5 206.2) scale(0.9 1)" text-anchor="middle" font-size="8.8" font-weight="bold" fill="#222">N/A</text><text transform="translate(278.4 205.1) scale(0.9 1)" text-anchor="middle" font-size="8.8" font-weight="bold" fill="#fff" stroke="#fff" stroke-width="2.6" stroke-linejoin="round" filter="url(#hb)" opacity="0.9">115</text><text transform="translate(278.4 205.1) scale(0.9 1)" text-anchor="middle" font-size="8.8" font-weight="bold" fill="#222">115</text><text transform="translate(293.2 178.1) scale(0.9 1)" text-anchor="middle" font-size="8.8" font-weight="bold" fill="#fff" stroke="#fff" stroke-width="2.6" stroke-linejoin="round" filter="url(#hb)" opacity="0.9">N/A</text><text transform="translate(293.2 178.1) scale(0.9 1)" text-anchor="middle" font-size="8.8" font-weight="bold" fill="#222">N/A</text><text transform="translate(324.2 165.0) scale(0.9 1)" text-anchor="middle" font-size="8.8" font-weight="bold" fill="#fff" stroke="#fff" stroke-width="2.6" stroke-linejoin="round" filter="url(#hb)" opacity="0.9">51</text><text transform="translate(324.2 165.0) scale(0.9 1)" text-anchor="middle" font-size="8.8" font-weight="bold" fill="#222">51</text><text transform="translate(329.2 164.7) scale(0.9 1)" text-anchor="middle" font-size="8.8" font-weight="bold" fill="#fff" stroke="#fff" stroke-width="2.6" stroke-linejoin="round" filter="url(#hb)" opacity="0.9">20</text><text transform="translate(329.2 164.7) scale(0.9 1)" text-anchor="middle" font-size="8.8" font-weight="bold" fill="#222">20</text><text transform="translate(312.7 168.3) scale(0.9 1)" text-anchor="middle" font-size="8.8" font-weight="bold" fill="#fff" stroke="#fff" stroke-width="2.6" stroke-linejoin="round" filter="url(#hb)" opacity="0.9">84</text><text transform="translate(312.7 168.3) scale(0.9 1)" text-anchor="middle" font-size="8.8" font-weight="bold" fill="#222">84</text><text transform="translate(313.3 175.6) scale(0.9 1)" text-anchor="middle" font-size="8.8" font-weight="bold" fill="#fff" stroke="#fff" stroke-width="2.6" stroke-linejoin="round" filter="url(#hb)" opacity="0.9">140</text><text transform="translate(313.3 175.6) scale(0.9 1)" text-anchor="middle" font-size="8.8" font-weight="bold" fill="#222">140</text><text transform="translate(311.1 186.3) scale(0.9 1)" text-anchor="middle" font-size="8.8" font-weight="bold" fill="#fff" stroke="#fff" stroke-width="2.6" stroke-linejoin="round" filter="url(#hb)" opacity="0.9">411</text><text transform="translate(311.1 186.3) scale(0.9 1)" text-anchor="middle" font-size="8.8" font-weight="bold" fill="#222">411</text><text transform="translate(321.2 186.9) scale(0.9 1)" text-anchor="middle" font-size="8.8" font-weight="bold" fill="#fff" stroke="#fff" stroke-width="2.6" stroke-linejoin="round" filter="url(#hb)" opacity="0.9">123</text><text transform="translate(321.2 186.9) scale(0.9 1)" text-anchor="middle" font-size="8.8" font-weight="bold" fill="#222">123</text><text transform="translate(324.0 193.1) scale(0.9 1)" text-anchor="middle" font-size="8.8" font-weight="bold" fill="#fff" stroke="#fff" stroke-width="2.6" stroke-linejoin="round" filter="url(#hb)" opacity="0.9">329</text><text transform="translate(324.0 193.1) scale(0.9 1)" text-anchor="middle" font-size="8.8" font-weight="bold" fill="#222">329</text><text transform="translate(329.0 199.0) scale(0.9 1)" text-anchor="middle" font-size="8.8" font-weight="bold" fill="#fff" stroke="#fff" stroke-width="2.6" stroke-linejoin="round" filter="url(#hb)" opacity="0.9">236</text><text transform="translate(329.0 199.0) scale(0.9 1)" text-anchor="middle" font-size="8.8" font-weight="bold" fill="#222">236</text><text transform="translate(344.2 200.5) scale(0.9 1)" text-anchor="middle" font-size="8.8" font-weight="bold" fill="#fff" stroke="#fff" stroke-width="2.6" stroke-linejoin="round" filter="url(#hb)" opacity="0.9">168</text><text transform="translate(344.2 200.5) scale(0.9 1)" text-anchor="middle" font-size="8.8" font-weight="bold" fill="#222">168</text><text transform="translate(309.3 206.7) scale(0.9 1)" text-anchor="middle" font-size="8.8" font-weight="bold" fill="#fff" stroke="#fff" stroke-width="2.6" stroke-linejoin="round" filter="url(#hb)" opacity="0.9">289</text><text transform="translate(309.3 206.7) scale(0.9 1)" text-anchor="middle" font-size="8.8" font-weight="bold" fill="#222">289</text><text transform="translate(349.8 212.2) scale(0.9 1)" text-anchor="middle" font-size="8.8" font-weight="bold" fill="#fff" stroke="#fff" stroke-width="2.6" stroke-linejoin="round" filter="url(#hb)" opacity="0.9">275</text><text transform="translate(349.8 212.2) scale(0.9 1)" text-anchor="middle" font-size="8.8" font-weight="bold" fill="#222">275</text><text transform="translate(354.8 208.2) scale(0.9 1)" text-anchor="middle" font-size="8.8" font-weight="bold" fill="#fff" stroke="#fff" stroke-width="2.6" stroke-linejoin="round" filter="url(#hb)" opacity="0.9">289</text><text transform="translate(354.8 208.2) scale(0.9 1)" text-anchor="middle" font-size="8.8" font-weight="bold" fill="#222">289</text><text transform="translate(320.0 218.9) scale(0.9 1)" text-anchor="middle" font-size="8.8" font-weight="bold" fill="#fff" stroke="#fff" stroke-width="2.6" stroke-linejoin="round" filter="url(#hb)" opacity="0.9">171</text><text transform="translate(320.0 218.9) scale(0.9 1)" text-anchor="middle" font-size="8.8" font-weight="bold" fill="#222">171</text><text transform="translate(333.5 220.0) scale(0.9 1)" text-anchor="middle" font-size="8.8" font-weight="bold" fill="#fff" stroke="#fff" stroke-width="2.6" stroke-linejoin="round" filter="url(#hb)" opacity="0.9">155</text><text transform="translate(333.5 220.0) scale(0.9 1)" text-anchor="middle" font-size="8.8" font-weight="bold" fill="#222">155</text><text transform="translate(335.2 229.0) scale(0.9 1)" text-anchor="middle" font-size="8.8" font-weight="bold" fill="#fff" stroke="#fff" stroke-width="2.6" stroke-linejoin="round" filter="url(#hb)" opacity="0.9">138</text><text transform="translate(335.2 229.0) scale(0.9 1)" text-anchor="middle" font-size="8.8" font-weight="bold" fill="#222">138</text><text transform="translate(334.4 242.3) scale(0.9 1)" text-anchor="middle" font-size="8.8" font-weight="bold" fill="#fff" stroke="#fff" stroke-width="2.6" stroke-linejoin="round" filter="url(#hb)" opacity="0.9">103</text><text transform="translate(334.4 242.3) scale(0.9 1)" text-anchor="middle" font-size="8.8" font-weight="bold" fill="#222">103</text><text transform="translate(364.2 223.2) scale(0.9 1)" text-anchor="middle" font-size="8.8" font-weight="bold" fill="#fff" stroke="#fff" stroke-width="2.6" stroke-linejoin="round" filter="url(#hb)" opacity="0.9">58</text><text transform="translate(364.2 223.2) scale(0.9 1)" text-anchor="middle" font-size="8.8" font-weight="bold" fill="#222">58</text><text transform="translate(383.9 214.2) scale(0.9 1)" text-anchor="middle" font-size="8.8" font-weight="bold" fill="#fff" stroke="#fff" stroke-width="2.6" stroke-linejoin="round" filter="url(#hb)" opacity="0.9">152</text><text transform="translate(383.9 214.2) scale(0.9 1)" text-anchor="middle" font-size="8.8" font-weight="bold" fill="#222">152</text><text transform="translate(377.4 220.7) scale(0.9 1)" text-anchor="middle" font-size="8.8" font-weight="bold" fill="#fff" stroke="#fff" stroke-width="2.6" stroke-linejoin="round" filter="url(#hb)" opacity="0.9">55</text><text transform="translate(377.4 220.7) scale(0.9 1)" text-anchor="middle" font-size="8.8" font-weight="bold" fill="#222">55</text><text transform="translate(398.2 210.0) scale(0.9 1)" text-anchor="middle" font-size="8.8" font-weight="bold" fill="#fff" stroke="#fff" stroke-width="2.6" stroke-linejoin="round" filter="url(#hb)" opacity="0.9">144</text><text transform="translate(398.2 210.0) scale(0.9 1)" text-anchor="middle" font-size="8.8" font-weight="bold" fill="#222">144</text><text transform="translate(384.6 234.4) scale(0.9 1)" text-anchor="middle" font-size="8.8" font-weight="bold" fill="#fff" stroke="#fff" stroke-width="2.6" stroke-linejoin="round" filter="url(#hb)" opacity="0.9">71</text><text transform="translate(384.6 234.4) scale(0.9 1)" text-anchor="middle" font-size="8.8" font-weight="bold" fill="#222">71</text><text transform="translate(385.3 267.6) scale(0.9 1)" text-anchor="middle" font-size="8.8" font-weight="bold" fill="#fff" stroke="#fff" stroke-width="2.6" stroke-linejoin="round" filter="url(#hb)" opacity="0.9">35</text><text transform="translate(385.3 267.6) scale(0.9 1)" text-anchor="middle" font-size="8.8" font-weight="bold" fill="#222">35</text><text transform="translate(385.8 154.3) scale(0.9 1)" text-anchor="middle" font-size="8.8" font-weight="bold" fill="#fff" stroke="#fff" stroke-width="2.6" stroke-linejoin="round" filter="url(#hb)" opacity="0.9">N/A</text><text transform="translate(385.8 154.3) scale(0.9 1)" text-anchor="middle" font-size="8.8" font-weight="bold" fill="#222">N/A</text><text transform="translate(403.1 172.9) scale(0.9 1)" text-anchor="middle" font-size="8.8" font-weight="bold" fill="#fff" stroke="#fff" stroke-width="2.6" stroke-linejoin="round" filter="url(#hb)" opacity="0.9">64</text><text transform="translate(403.1 172.9) scale(0.9 1)" text-anchor="middle" font-size="8.8" font-weight="bold" fill="#222">64</text><text transform="translate(416.6 169.1) scale(0.9 1)" text-anchor="middle" font-size="8.8" font-weight="bold" fill="#fff" stroke="#fff" stroke-width="2.6" stroke-linejoin="round" filter="url(#hb)" opacity="0.9">177</text><text transform="translate(416.6 169.1) scale(0.9 1)" text-anchor="middle" font-size="8.8" font-weight="bold" fill="#222">177</text><text transform="translate(412.7 192.8) scale(0.9 1)" text-anchor="middle" font-size="8.8" font-weight="bold" fill="#fff" stroke="#fff" stroke-width="2.6" stroke-linejoin="round" filter="url(#hb)" opacity="0.9">97</text><text transform="translate(412.7 192.8) scale(0.9 1)" text-anchor="middle" font-size="8.8" font-weight="bold" fill="#222">97</text></g></svg></div>

<div class="a" style="left:293px;top:57px;width:107px;height:90px;background:#fff;border-radius:8px;box-shadow:0 2px 5px rgba(0,0,0,0.3)"></div>
<svg class="a" style="left:317px;top:145px" width="17" height="9" viewBox="317 145 17 9"><path d="M319.3 146 L325.5 152.8 L331.7 146 Z" fill="#fff"/></svg>
<div class="a" style="left:293px;top:68px;width:107px;text-align:center;font-size:9.3px;line-height:10px;color:#222;white-space:nowrap">Bishkek<br>2020-12-21 8:00 AM<br>(LT)</div>
<div class="a" style="left:303px;top:98px;width:87px;height:39px;border:1px solid #0d3d6e;background:#fff"></div>
<div class="a" style="left:304px;top:99px;width:85px;height:17px;background:#054a86"></div>
<div class="a" style="left:358px;top:116px;width:1px;height:20px;background:#0d3d6e"></div>
<div class="a" style="left:359px;top:117px;width:30px;height:19px;background:#ffff00"></div>
<div class="a" style="left:304px;top:102px;width:54px;text-align:center;font-size:10px;line-height:10px;font-weight:bold;color:#fff">Pollutant</div>
<div class="a" style="left:359px;top:102px;width:30px;text-align:center;font-size:10px;line-height:10px;font-weight:bold;color:#fff">AQI</div>
<div class="a" style="left:304px;top:121px;width:54px;text-align:center;font-size:9.5px;line-height:10px;color:#333">PM2.5</div>
<div class="a" style="left:359px;top:121px;width:30px;text-align:center;font-size:9.5px;line-height:10px;color:#222">51</div>

<!-- right panel -->
<div class="a ph" style="left:497px;top:7px;width:219px;height:23px;padding-top:5.7px">Select a City</div>
<div class="a sel" style="left:497px;top:32px;width:219px;height:24px;padding:3.8px 0 0 6px">Bishkek</div>
<div class="a ph" style="left:497px;top:70px;width:219px;height:23px;padding-top:5.7px">Select a Parameter</div>
<div class="a sel" style="left:497px;top:95px;width:219px;height:24px;padding:3.8px 0 0 6px">PM2.5</div>
<div class="a" style="left:496px;top:132px;width:221px;height:49px;background:#fff;border:1px solid #c8c8c8"></div>
<div class="a" style="left:503.5px;top:140px;font-size:9.6px;font-weight:bold;color:#4a4a4a">Bishkek</div>
<svg class="a" style="left:686px;top:150px" width="23" height="23" viewBox="0 0 23 23"><rect width="23" height="23" fill="#f0b440"/><circle cx="5.2" cy="17.8" r="2.6" fill="#fff"/><path d="M3 9.5 A10.5 10.5 0 0 1 13.5 20" stroke="#fff" stroke-width="3" fill="none"/><path d="M3 3.5 A16.5 16.5 0 0 1 19.5 20" stroke="#fff" stroke-width="3" fill="none"/></svg>
<div class="a note" style="left:496.5px;top:188px">Note: Values above 500 are considered Beyond the AQI. Follow<br>recommendations for the Hazardous category. Additional<br>information on reducing exposure to extremely high levels of<br>particle pollution is available <b style="color:#1a3a6a;text-decoration:underline">here</b>.</div>

<svg class="a" style="left:688px;top:36px" width="24" height="11" viewBox="0 0 24 11"><path d="M3 3 L8.8 7.8 M8.8 3 L3 7.8" stroke="#888" stroke-width="1.2"/><path d="M14 4.9 L20.8 4.9 L17.4 7.8 Z" fill="#888"/></svg>
<svg class="a" style="left:688px;top:99px" width="24" height="11" viewBox="0 0 24 11"><path d="M3 3 L8.8 7.8 M8.8 3 L3 7.8" stroke="#888" stroke-width="1.2"/><path d="M14 4.9 L20.8 4.9 L17.4 7.8 Z" fill="#888"/></svg>
<!-- tabs -->
<div class="a tab" style="left:15px;top:319px;width:72px;height:21px;background:#fff;color:#333;border-color:#999;border-top:1.6px solid #0a3a66;line-height:19.5px">AQI</div>
<div class="a tab" style="left:89px;top:319px;width:111px;height:20px">Concentration</div>
<div class="a tab" style="left:202px;top:319px;width:92px;height:20px">Historical</div>
<div class="a" style="left:15px;top:339px;width:702px;height:1px;background:#999"></div>
<div class="a" style="left:15px;top:348px;font-size:9.35px;color:#333;white-space:nowrap">Learn more about how the Air Quality Index [AQI] is calculated from the EPA <b style="font-weight:normal;color:#1a3a6a;text-decoration:underline">here</b>.</div>

<!-- chart -->
<div class="a" style="left:15px;top:373px;width:526px;height:250px;background:#fff"></div>
<svg class="a" style="left:0;top:0" width="730" height="623" viewBox="0 0 730 623" font-family="Liberation Sans"><line x1="65.85" y1="511.7" x2="534.35" y2="511.7" stroke="#e6e6e6" stroke-width="1"/><line x1="65.85" y1="487.3" x2="534.35" y2="487.3" stroke="#e6e6e6" stroke-width="1"/><line x1="65.85" y1="462.8" x2="534.35" y2="462.8" stroke="#e6e6e6" stroke-width="1"/><line x1="65.85" y1="438.4" x2="534.35" y2="438.4" stroke="#e6e6e6" stroke-width="1"/><line x1="65.85" y1="413.9" x2="534.35" y2="413.9" stroke="#e6e6e6" stroke-width="1"/><text x="55.5" y="538.4" text-anchor="end" font-size="8" letter-spacing="0.5" fill="#222">0</text><text x="55.5" y="513.9" text-anchor="end" font-size="8" letter-spacing="0.5" fill="#222">100</text><text x="55.5" y="489.5" text-anchor="end" font-size="8" letter-spacing="0.5" fill="#222">200</text><text x="55.5" y="465.0" text-anchor="end" font-size="8" letter-spacing="0.5" fill="#222">300</text><text x="55.5" y="440.6" text-anchor="end" font-size="8" letter-spacing="0.5" fill="#222">400</text><text x="55.5" y="416.1" text-anchor="end" font-size="8" letter-spacing="0.5" fill="#222">500</text><rect x="70.4" y="519.7" width="10.4" height="16.5" fill="#ffff00" stroke="#6e6e08" stroke-width="1"/><rect x="89.9" y="518.3" width="10.4" height="17.9" fill="#ffff00" stroke="#6e6e08" stroke-width="1"/><rect x="109.5" y="510.9" width="10.4" height="25.3" fill="#ff7e00" stroke="#7a3c00" stroke-width="1"/><rect x="129.0" y="495.0" width="10.4" height="41.2" fill="#ff0000" stroke="#800000" stroke-width="1"/><rect x="148.5" y="492.9" width="10.4" height="43.3" fill="#ff0000" stroke="#800000" stroke-width="1"/><rect x="168.0" y="496.9" width="10.4" height="39.3" fill="#ff0000" stroke="#800000" stroke-width="1"/><rect x="187.5" y="498.8" width="10.4" height="37.4" fill="#ff0000" stroke="#800000" stroke-width="1"/><rect x="207.1" y="509.0" width="10.4" height="27.2" fill="#ff7e00" stroke="#7a3c00" stroke-width="1"/><rect x="226.6" y="514.6" width="10.4" height="21.6" fill="#ffff00" stroke="#6e6e08" stroke-width="1"/><rect x="246.1" y="518.3" width="10.4" height="17.9" fill="#ffff00" stroke="#6e6e08" stroke-width="1"/><rect x="265.6" y="518.8" width="10.4" height="17.4" fill="#ffff00" stroke="#6e6e08" stroke-width="1"/><rect x="285.1" y="517.9" width="10.4" height="18.3" fill="#ffff00" stroke="#6e6e08" stroke-width="1"/><rect x="304.7" y="520.9" width="10.4" height="15.3" fill="#ffff00" stroke="#6e6e08" stroke-width="1"/><rect x="324.2" y="520.9" width="10.4" height="15.3" fill="#ffff00" stroke="#6e6e08" stroke-width="1"/><rect x="343.7" y="520.4" width="10.4" height="15.8" fill="#ffff00" stroke="#6e6e08" stroke-width="1"/><rect x="363.2" y="518.8" width="10.4" height="17.4" fill="#ffff00" stroke="#6e6e08" stroke-width="1"/><rect x="382.7" y="505.8" width="10.4" height="30.4" fill="#ff7e00" stroke="#7a3c00" stroke-width="1"/><rect x="402.3" y="506.9" width="10.4" height="29.3" fill="#ff7e00" stroke="#7a3c00" stroke-width="1"/><rect x="421.8" y="515.8" width="10.4" height="20.4" fill="#ffff00" stroke="#6e6e08" stroke-width="1"/><rect x="441.3" y="520.6" width="10.4" height="15.6" fill="#ffff00" stroke="#6e6e08" stroke-width="1"/><rect x="460.8" y="523.0" width="10.4" height="13.2" fill="#ffff00" stroke="#6e6e08" stroke-width="1"/><rect x="480.3" y="525.8" width="10.4" height="10.4" fill="#00e400" stroke="#006400" stroke-width="1"/><rect x="499.9" y="525.8" width="10.4" height="10.4" fill="#00e400" stroke="#006400" stroke-width="1"/><rect x="519.4" y="523.7" width="10.4" height="12.5" fill="#ffff00" stroke="#6e6e08" stroke-width="1"/><line x1="65.85" y1="536.2" x2="534.35" y2="536.2" stroke="#ccd6eb" stroke-width="1"/><line x1="65.8" y1="536.2" x2="65.8" y2="542.2" stroke="#ccd6eb" stroke-width="1"/><line x1="85.4" y1="536.2" x2="85.4" y2="542.2" stroke="#ccd6eb" stroke-width="1"/><line x1="104.9" y1="536.2" x2="104.9" y2="542.2" stroke="#ccd6eb" stroke-width="1"/><line x1="124.4" y1="536.2" x2="124.4" y2="542.2" stroke="#ccd6eb" stroke-width="1"/><line x1="143.9" y1="536.2" x2="143.9" y2="542.2" stroke="#ccd6eb" stroke-width="1"/><line x1="163.5" y1="536.2" x2="163.5" y2="542.2" stroke="#ccd6eb" stroke-width="1"/><line x1="183.0" y1="536.2" x2="183.0" y2="542.2" stroke="#ccd6eb" stroke-width="1"/><line x1="202.5" y1="536.2" x2="202.5" y2="542.2" stroke="#ccd6eb" stroke-width="1"/><line x1="222.0" y1="536.2" x2="222.0" y2="542.2" stroke="#ccd6eb" stroke-width="1"/><line x1="241.5" y1="536.2" x2="241.5" y2="542.2" stroke="#ccd6eb" stroke-width="1"/><line x1="261.1" y1="536.2" x2="261.1" y2="542.2" stroke="#ccd6eb" stroke-width="1"/><line x1="280.6" y1="536.2" x2="280.6" y2="542.2" stroke="#ccd6eb" stroke-width="1"/><line x1="300.1" y1="536.2" x2="300.1" y2="542.2" stroke="#ccd6eb" stroke-width="1"/><line x1="319.6" y1="536.2" x2="319.6" y2="542.2" stroke="#ccd6eb" stroke-width="1"/><line x1="339.1" y1="536.2" x2="339.1" y2="542.2" stroke="#ccd6eb" stroke-width="1"/><line x1="358.7" y1="536.2" x2="358.7" y2="542.2" stroke="#ccd6eb" stroke-width="1"/><line x1="378.2" y1="536.2" x2="378.2" y2="542.2" stroke="#ccd6eb" stroke-width="1"/><line x1="397.7" y1="536.2" x2="397.7" y2="542.2" stroke="#ccd6eb" stroke-width="1"/><line x1="417.2" y1="536.2" x2="417.2" y2="542.2" stroke="#ccd6eb" stroke-width="1"/><line x1="436.7" y1="536.2" x2="436.7" y2="542.2" stroke="#ccd6eb" stroke-width="1"/><line x1="456.3" y1="536.2" x2="456.3" y2="542.2" stroke="#ccd6eb" stroke-width="1"/><line x1="475.8" y1="536.2" x2="475.8" y2="542.2" stroke="#ccd6eb" stroke-width="1"/><line x1="495.3" y1="536.2" x2="495.3" y2="542.2" stroke="#ccd6eb" stroke-width="1"/><line x1="514.8" y1="536.2" x2="514.8" y2="542.2" stroke="#ccd6eb" stroke-width="1"/><line x1="534.4" y1="536.2" x2="534.4" y2="542.2" stroke="#ccd6eb" stroke-width="1"/><text x="76.8" y="546.7" text-anchor="end" font-size="8" letter-spacing="0.1" fill="#666" transform="rotate(-45 76.8 546.7)">9 AM</text><text x="96.3" y="546.7" text-anchor="end" font-size="8" letter-spacing="0.1" fill="#666" transform="rotate(-45 96.3 546.7)">10 AM</text><text x="115.9" y="546.7" text-anchor="end" font-size="8" letter-spacing="0.1" fill="#666" transform="rotate(-45 115.9 546.7)">11 AM</text><text x="135.4" y="546.7" text-anchor="end" font-size="8" letter-spacing="0.1" fill="#666" transform="rotate(-45 135.4 546.7)">12 PM</text><text x="154.9" y="546.7" text-anchor="end" font-size="8" letter-spacing="0.1" fill="#666" transform="rotate(-45 154.9 546.7)">1 PM</text><text x="174.4" y="546.7" text-anchor="end" font-size="8" letter-spacing="0.1" fill="#666" transform="rotate(-45 174.4 546.7)">2 PM</text><text x="193.9" y="546.7" text-anchor="end" font-size="8" letter-spacing="0.1" fill="#666" transform="rotate(-45 193.9 546.7)">3 PM</text><text x="213.5" y="546.7" text-anchor="end" font-size="8" letter-spacing="0.1" fill="#666" transform="rotate(-45 213.5 546.7)">4 PM</text><text x="233.0" y="546.7" text-anchor="end" font-size="8" letter-spacing="0.1" fill="#666" transform="rotate(-45 233.0 546.7)">5 PM</text><text x="252.5" y="546.7" text-anchor="end" font-size="8" letter-spacing="0.1" fill="#666" transform="rotate(-45 252.5 546.7)">6 PM</text><text x="272.0" y="546.7" text-anchor="end" font-size="8" letter-spacing="0.1" fill="#666" transform="rotate(-45 272.0 546.7)">7 PM</text><text x="291.5" y="546.7" text-anchor="end" font-size="8" letter-spacing="0.1" fill="#666" transform="rotate(-45 291.5 546.7)">8 PM</text><text x="311.1" y="546.7" text-anchor="end" font-size="8" letter-spacing="0.1" fill="#666" transform="rotate(-45 311.1 546.7)">9 PM</text><text x="330.6" y="546.7" text-anchor="end" font-size="8" letter-spacing="0.1" fill="#666" transform="rotate(-45 330.6 546.7)">10 PM</text><text x="350.1" y="546.7" text-anchor="end" font-size="8" letter-spacing="0.1" fill="#666" transform="rotate(-45 350.1 546.7)">11 PM</text><text x="369.6" y="546.7" text-anchor="end" font-size="8" letter-spacing="0.1" fill="#666" transform="rotate(-45 369.6 546.7)">Dec 21, 2020 12 AM</text><text x="389.1" y="546.7" text-anchor="end" font-size="8" letter-spacing="0.1" fill="#666" transform="rotate(-45 389.1 546.7)">1 AM</text><text x="408.7" y="546.7" text-anchor="end" font-size="8" letter-spacing="0.1" fill="#666" transform="rotate(-45 408.7 546.7)">2 AM</text><text x="428.2" y="546.7" text-anchor="end" font-size="8" letter-spacing="0.1" fill="#666" transform="rotate(-45 428.2 546.7)">3 AM</text><text x="447.7" y="546.7" text-anchor="end" font-size="8" letter-spacing="0.1" fill="#666" transform="rotate(-45 447.7 546.7)">4 AM</text><text x="467.2" y="546.7" text-anchor="end" font-size="8" letter-spacing="0.1" fill="#666" transform="rotate(-45 467.2 546.7)">5 AM</text><text x="486.7" y="546.7" text-anchor="end" font-size="8" letter-spacing="0.1" fill="#666" transform="rotate(-45 486.7 546.7)">6 AM</text><text x="506.3" y="546.7" text-anchor="end" font-size="8" letter-spacing="0.1" fill="#666" transform="rotate(-45 506.3 546.7)">7 AM</text><text x="525.8" y="546.7" text-anchor="end" font-size="8" letter-spacing="0.1" fill="#666" transform="rotate(-45 525.8 546.7)">8 AM</text><text x="0" y="0" font-size="8.4" fill="#222" text-anchor="middle" transform="translate(35 472) rotate(-90)">AQI</text><text x="278.5" y="388.8" font-size="11" letter-spacing="0.8" fill="#333" text-anchor="middle">Bishkek – PM2.5</text><rect x="263" y="614" width="11" height="8" fill="#ccc"/><text x="277.8" y="621" font-size="8.4" font-weight="bold" fill="#222">AQI</text></svg>

<!-- conditions -->
<div class="a" style="left:551px;top:373px;width:165px;height:260px;background:#eeeeee;border:1px solid #1d4470"></div>
<div class="a" style="left:551px;top:373px;width:165px;height:50px;background:#054a86"></div>
<div class="a cc" style="left:551px;top:379px;width:165px;font-size:10.2px;line-height:12px">Current Conditions</div>
<div class="a cc" style="left:551px;top:395px;width:165px;font-size:8.7px;line-height:10px">observed at</div>
<div class="a cc" style="left:551px;top:406px;width:165px;font-size:10.2px;line-height:12px">Dec 21, 2020 8:00 AM (LT)</div>
<div class="a" style="left:552px;top:423px;width:163px;height:77px;background:#ffff00"></div>
<div class="a cc" style="left:551px;top:433px;width:165px;font-size:13.5px;line-height:18px;color:#111">51 AQI</div><div class="a cc" style="left:551px;top:453px;width:165px;font-size:13.5px;line-height:18px;color:#111">Moderate</div><div class="a cc" style="left:551px;top:472px;width:165px;font-size:13.5px;line-height:18px;color:#111">PM2.5</div>
<div class="a cc" style="left:551px;top:505px;width:165px;font-size:8.2px;line-height:10px;color:#222">Health Message</div>
<div class="a" style="left:555px;top:521px;font-size:8px;line-height:14px;color:#555;white-space:nowrap">The AQI is between 51 and 100. Air quality<br>is acceptable; however, pollution in this<br>range may pose a moderate health concern<br>for a very small number of individuals.<br>People who are unusually sensitive to<br>ozone or particle pollution may experience<br>respiratory symptoms.</div>
</body></html>
